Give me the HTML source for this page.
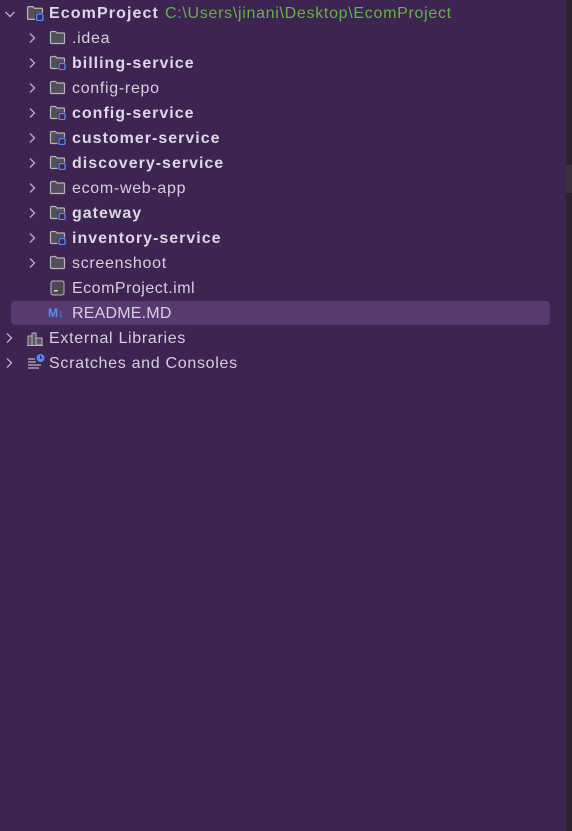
<!DOCTYPE html>
<html><head><meta charset="utf-8"><style>
body{margin:0;width:572px;height:831px;background:#3d2451;overflow:hidden;position:relative;font-family:"Liberation Sans",sans-serif;font-size:16px;color:#d4d0dc;letter-spacing:0.7px}
.r{position:absolute;left:0;height:25px;width:560px}
.t{position:absolute;top:3px;white-space:nowrap;line-height:20px}
.b{font-weight:bold;color:#dcd8e4;letter-spacing:1px}
svg{position:absolute}
.sel{position:absolute;left:11px;top:301px;width:539px;height:24px;background:#573a6f;border-radius:4px}
.strip{position:absolute;left:566px;top:0;width:6px;height:831px;background:#2b2332}
.sb{position:absolute;left:566px;top:165px;width:6px;height:28px;background:#3a3440}
</style></head><body>
<div class="strip"></div><div class="sb"></div>
<div class="sel"></div>
<svg width="0" height="0" style="position:absolute"><defs>
<symbol id="chev" viewBox="0 0 10 12"><path d="M3 1.5 L7.5 6 L3 10.5" fill="none" stroke="#b4b0bc" stroke-width="1.4"/></symbol>
<symbol id="fold" viewBox="0 0 17 15"><path d="M1.5 3 Q1.5 1.5 3 1.5 H6.5 L8 3 H14.5 Q15.5 3 15.5 4 V12.5 Q15.5 13.5 14.5 13.5 H2.5 Q1.5 13.5 1.5 12.5 Z" fill="#505056" stroke="#b8b6bd" stroke-width="1.2"/></symbol>
<symbol id="mod" viewBox="0 0 17 15"><path d="M1.5 3 Q1.5 1.5 3 1.5 H6.5 L8 3 H14.5 Q15.5 3 15.5 4 V12.5 Q15.5 13.5 14.5 13.5 H2.5 Q1.5 13.5 1.5 12.5 Z" fill="#505056" stroke="#b8b6bd" stroke-width="1.2"/><rect x="8.5" y="7.5" width="8" height="7.5" fill="#3d2451"/><rect x="10" y="8.5" width="6" height="6" rx="1.2" fill="#3d2451" stroke="#548af7" stroke-width="1.3"/></symbol>
</defs></svg>

<div class="r" style="top:1px">
<svg width="10" height="12" style="left:5px;top:7px;transform:rotate(90deg)"><use href="#chev"/></svg>
<svg width="18" height="16" style="left:26px;top:4px"><use href="#mod"/></svg>
<span class="t b" style="left:49px;letter-spacing:1.1px">EcomProject</span>
<span class="t" style="left:165px;color:#5fb548;letter-spacing:0.7px">C:\Users\jinani\Desktop\EcomProject</span>
</div>

<div class="r" style="top:26px"><svg width="10" height="12" style="left:27px;top:6px"><use href="#chev"/></svg><svg width="17" height="15" style="left:49px;top:4px"><use href="#fold"/></svg><span class="t" style="left:72px">.idea</span></div>
<div class="r" style="top:51px"><svg width="10" height="12" style="left:27px;top:6px"><use href="#chev"/></svg><svg width="17" height="15" style="left:49px;top:4px"><use href="#mod"/></svg><span class="t b" style="left:72px">billing-service</span></div>
<div class="r" style="top:76px"><svg width="10" height="12" style="left:27px;top:6px"><use href="#chev"/></svg><svg width="17" height="15" style="left:49px;top:4px"><use href="#fold"/></svg><span class="t" style="left:72px">config-repo</span></div>
<div class="r" style="top:101px"><svg width="10" height="12" style="left:27px;top:6px"><use href="#chev"/></svg><svg width="17" height="15" style="left:49px;top:4px"><use href="#mod"/></svg><span class="t b" style="left:72px">config-service</span></div>
<div class="r" style="top:126px"><svg width="10" height="12" style="left:27px;top:6px"><use href="#chev"/></svg><svg width="17" height="15" style="left:49px;top:4px"><use href="#mod"/></svg><span class="t b" style="left:72px">customer-service</span></div>
<div class="r" style="top:151px"><svg width="10" height="12" style="left:27px;top:6px"><use href="#chev"/></svg><svg width="17" height="15" style="left:49px;top:4px"><use href="#mod"/></svg><span class="t b" style="left:72px">discovery-service</span></div>
<div class="r" style="top:176px"><svg width="10" height="12" style="left:27px;top:6px"><use href="#chev"/></svg><svg width="17" height="15" style="left:49px;top:4px"><use href="#fold"/></svg><span class="t" style="left:72px">ecom-web-app</span></div>
<div class="r" style="top:201px"><svg width="10" height="12" style="left:27px;top:6px"><use href="#chev"/></svg><svg width="17" height="15" style="left:49px;top:4px"><use href="#mod"/></svg><span class="t b" style="left:72px">gateway</span></div>
<div class="r" style="top:226px"><svg width="10" height="12" style="left:27px;top:6px"><use href="#chev"/></svg><svg width="17" height="15" style="left:49px;top:4px"><use href="#mod"/></svg><span class="t b" style="left:72px">inventory-service</span></div>
<div class="r" style="top:251px"><svg width="10" height="12" style="left:27px;top:6px"><use href="#chev"/></svg><svg width="17" height="15" style="left:49px;top:4px"><use href="#fold"/></svg><span class="t" style="left:72px">screenshoot</span></div>
<div class="r" style="top:276px"><svg width="16" height="16" style="left:50px;top:4px"><rect x="1" y="1" width="13" height="14" rx="2" fill="#4a4850" stroke="#b8b6bd"/><rect x="4" y="10" width="4" height="1.5" fill="#d0ced4"/></svg><span class="t" style="left:72px;letter-spacing:0.5px">EcomProject.iml</span></div>
<div class="r" style="top:301px"><span style="position:absolute;left:48px;top:5px;font-size:12px;font-weight:bold;color:#5b8ef5;line-height:14px;letter-spacing:0">M↓</span><span class="t" style="left:72px;letter-spacing:0.2px">README.MD</span></div>
<div class="r" style="top:326px"><svg width="10" height="12" style="left:4px;top:6px"><use href="#chev"/></svg><svg width="18" height="16" style="left:26px;top:4px"><path d="M2 15 V6 H6 V15 M6 15 V3 H10 V15 M10 15 V8 H16 V15 Z M1 15.5 H17" fill="#5a5860" stroke="#b8b6bd" stroke-width="1"/></svg><span class="t" style="left:49px">External Libraries</span></div>
<div class="r" style="top:351px"><svg width="10" height="12" style="left:4px;top:6px"><use href="#chev"/></svg><svg width="20" height="18" style="left:26px;top:2px"><path d="M2 6 H9 M2 9 H10 M2 12 H15 M2 15 H13" stroke="#b8b6bd" stroke-width="1.2"/><circle cx="14.5" cy="5" r="4" fill="#548af7"/><path d="M14.5 2.5 V5 H16.5" stroke="#1e1e2e" stroke-width="1" fill="none"/></svg><span class="t" style="left:49px">Scratches and Consoles</span></div>
</body></html>
